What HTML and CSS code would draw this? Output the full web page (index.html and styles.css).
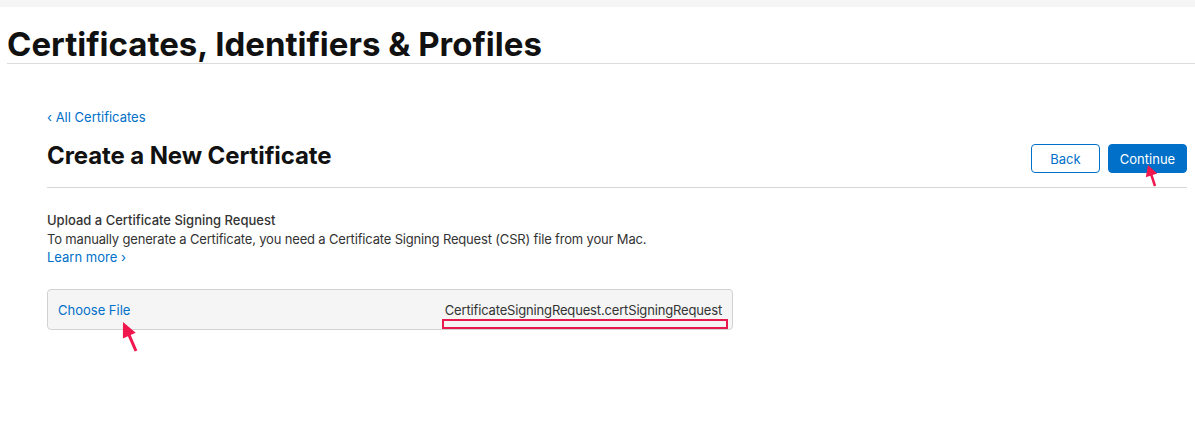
FILE: index.html
```html
<!DOCTYPE html>
<html>
<head>
<meta charset="utf-8">
<link rel="stylesheet" href="styles.css">
</head>
<body>
<div class="topbar"></div>
<header class="page-header">
  <h1 class="page-title">Certificates, Identifiers &amp; Profiles</h1>
</header>
<main class="content">
  <a class="back-link" href="#">‹ All Certificates</a>
  <div class="title-row">
    <h2 class="section-title">Create a New Certificate</h2>
    <div class="actions">
      <button class="btn btn-outline">Back</button>
      <button class="btn btn-primary">Continue
        <svg class="arrow arrow-continue" width="14" height="24" viewBox="0 0 14 24"><path d="M3 1 L12.2 9.5 L7.7 11 L11.2 21.6 L8.8 22.4 L5.3 11.8 L0.8 13.3 Z" fill="#f0174f"/></svg>
      </button>
    </div>
  </div>
  <section class="upload">
    <h3 class="upload-title">Upload a Certificate Signing Request</h3>
    <p class="upload-desc">To manually generate a Certificate, you need a Certificate Signing Request (CSR) file from your Mac.</p>
    <a class="learn-more" href="#">Learn more ›</a>
    <div class="file-box">
      <span class="choose">Choose File</span>
      <span class="filename">CertificateSigningRequest.certSigningRequest</span>
      <svg class="arrow arrow-choose" width="18" height="32" viewBox="0 0 18 32"><path d="M2 1 L14.7 11.7 L9.7 14 L16.4 29.4 L13.6 30.6 L6.9 15.2 L1.9 17.5 Z" fill="#f0174f"/></svg>
    </div>
  </section>
</main>
</body>
</html>
```
FILE: styles.css
```css
* { box-sizing: border-box; }
html, body {
  min-height: 100%;
}
body {
  margin: 0;
  background: #fff;
  font-family: Inter, "Noto Sans", "Liberation Sans", sans-serif;
  color: #1d1d1f;
}
.topbar {
  height: 7px;
  background: #f5f5f5;
}
.page-header {
  margin-left: 7px;
  border-bottom: 1px solid #dcdcdc;
  height: 57px;
  padding-top: 18px;
}
.page-title {
  margin: 0;
  font-size: 33px;
  line-height: 38px;
  font-weight: 700;
  color: #111;
}
.content {
  padding: 0 8px 100px 47px;
}
.back-link {
  display: block;
  margin-top: 45px;
  font-size: 13px;
  line-height: 16px;
  color: #0070c9;
  text-decoration: none;
}
.title-row {
  display: flex;
  justify-content: space-between;
  align-items: flex-start;
  border-bottom: 1px solid #d6d6d6;
  margin-top: 4px;
  height: 59px;
}
.section-title {
  margin: 12px 0 0;
  font-size: 24px;
  line-height: 30px;
  font-weight: 700;
  letter-spacing: -0.1px;
  color: #111;
}
.actions {
  display: flex;
  gap: 8px;
  margin-top: 15px;
}
.btn {
  position: relative;
  height: 29px;
  border-radius: 4px;
  font-family: inherit;
  font-size: 13px;
  padding: 0;
  cursor: pointer;
}
.btn-outline {
  width: 69px;
  background: #fff;
  border: 1px solid #0070c9;
  color: #0070c9;
}
.btn-primary {
  width: 79px;
  background: #0070c9;
  border: 1px solid #0070c9;
  color: #fff;
}
.arrow {
  position: absolute;
  pointer-events: none;
  overflow: visible;
}
.arrow-continue {
  left: 36px;
  top: 19px;
}
.upload {
  padding-top: 23px;
}
.upload-title {
  margin: 0;
  font-size: 13px;
  line-height: 18px;
  font-weight: 500;
  color: #333;
}
.upload-desc {
  margin: 1px 0 0;
  font-size: 13px;
  line-height: 18px;
  letter-spacing: -0.17px;
  color: #333;
}
.learn-more {
  display: block;
  font-size: 13px;
  line-height: 18px;
  color: #0070c9;
  text-decoration: none;
}
.file-box {
  position: relative;
  margin-top: 23px;
  width: 686px;
  height: 41px;
  background: #f5f5f5;
  border: 1px solid #d2d2d2;
  border-radius: 4px;
  display: flex;
  align-items: center;
  justify-content: space-between;
  padding: 0 10px;
  font-size: 13px;
  line-height: 16px;
}
.choose {
  color: #0070c9;
}
.filename {
  position: relative;
  color: #333;
  letter-spacing: -0.16px;
}
.filename::after {
  content: "";
  position: absolute;
  left: -3px;
  right: -6px;
  top: calc(100% + 1px);
  height: 6px;
  border: 2px solid #e8194c;
}
.arrow-choose {
  left: 73px;
  top: 31px;
}
```
